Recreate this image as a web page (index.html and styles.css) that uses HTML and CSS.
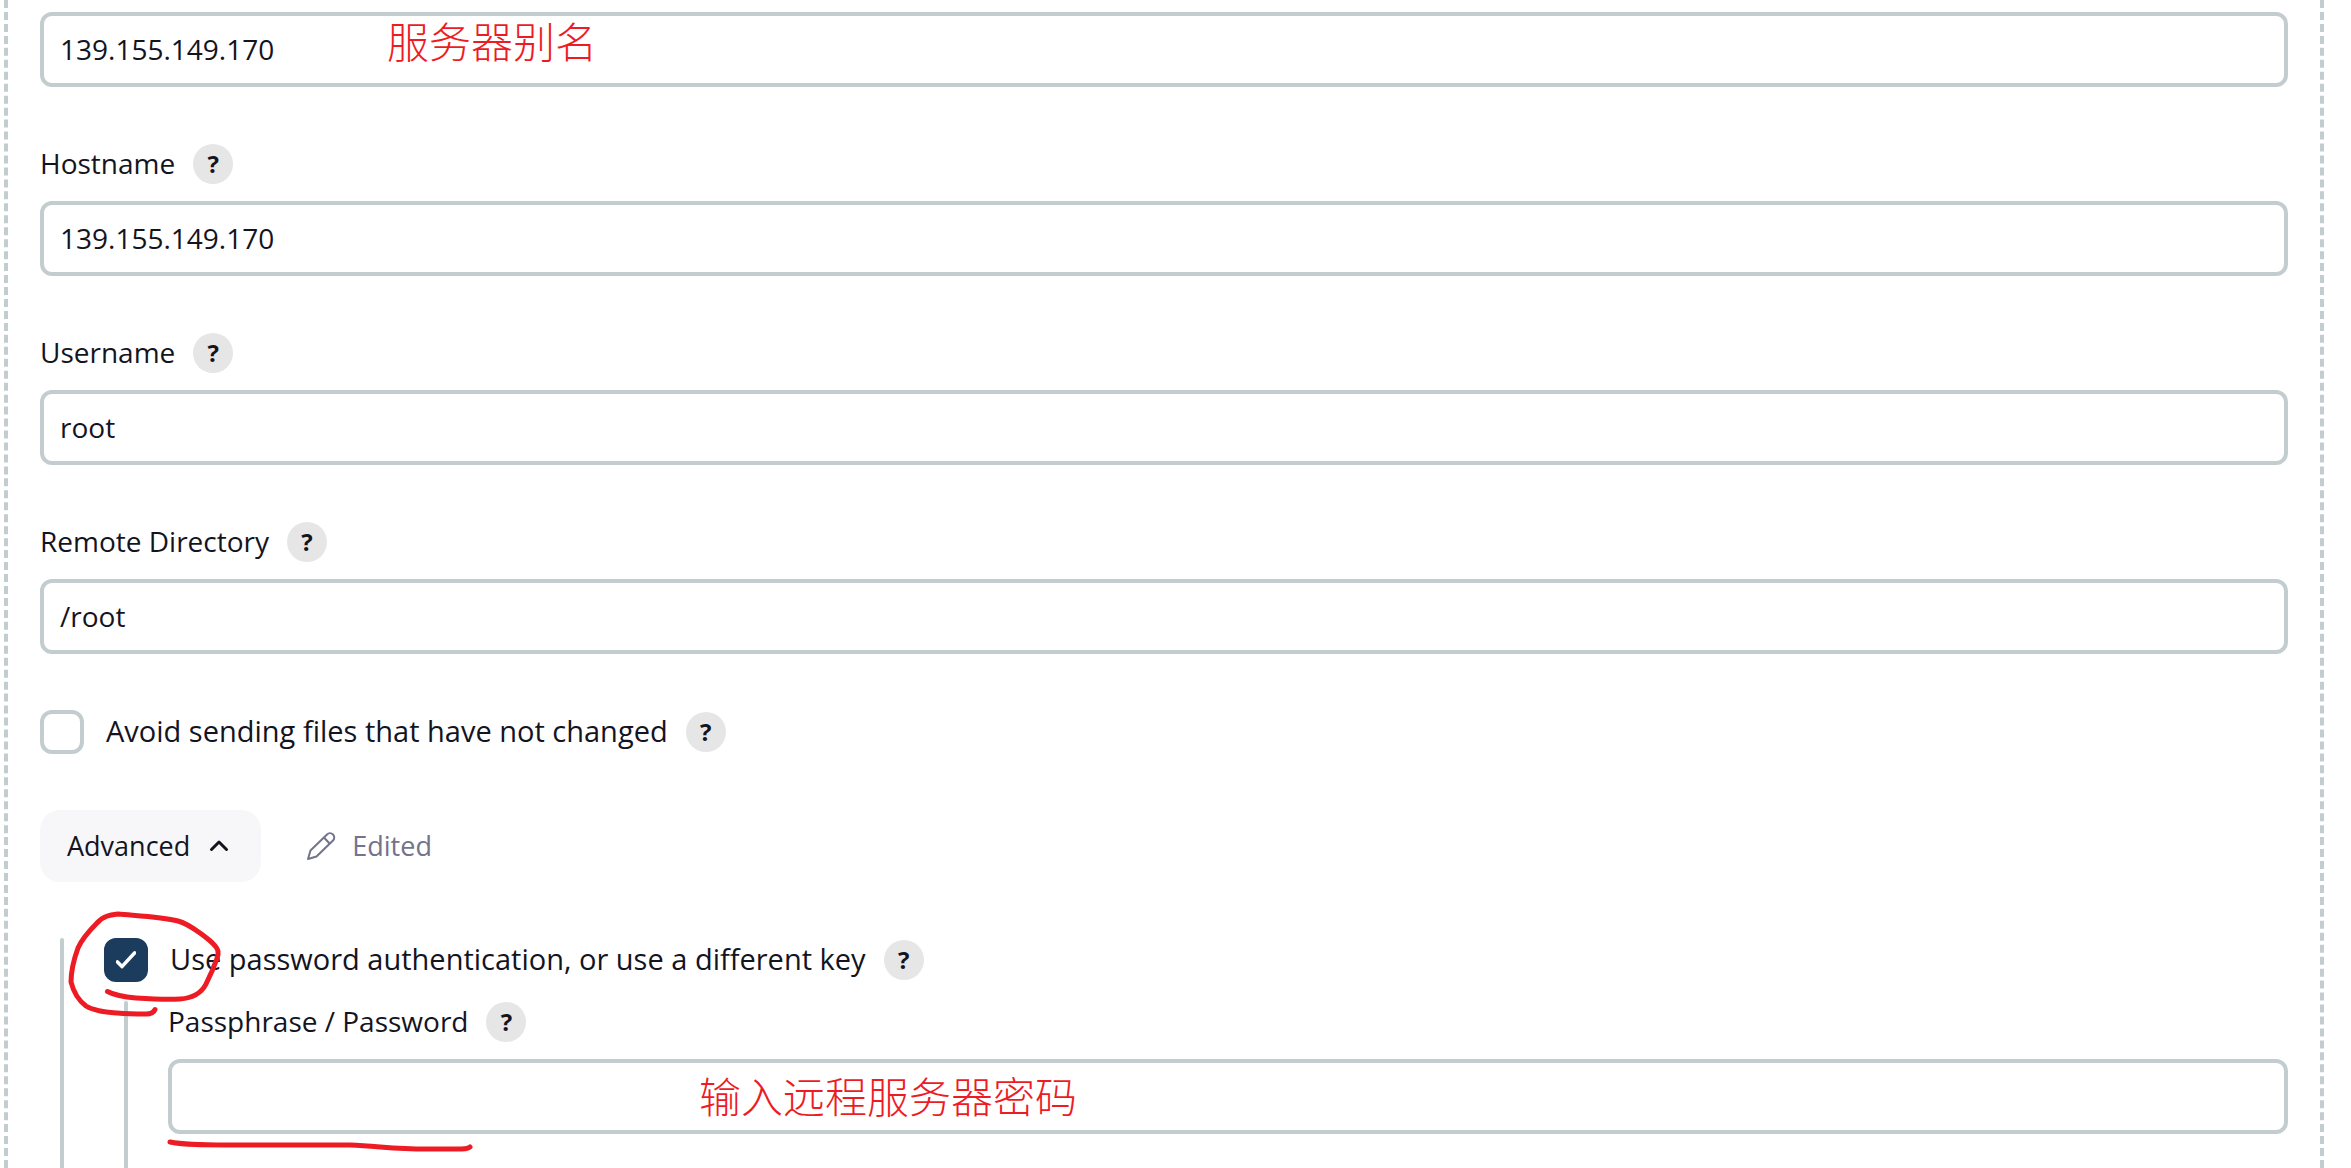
FILE: index.html
```html
<!DOCTYPE html>
<html lang="en">
<head>
    <meta charset="UTF-8">
    <meta name="viewport" content="width=device-width, initial-scale=1.0">
    <title>SSH Server</title>
    <link rel="stylesheet" href="styles.css">
</head>
<body>
    <form class="server">
        <div class="field">
            <div class="input-wrap">
                <input class="text-input" type="text" id="name" aria-label="Name" value="139.155.149.170">
                <span class="note note-name" lang="zh">服务器别名</span>
            </div>
        </div>

        <div class="field">
            <div class="label-row">
                <label for="hostname">Hostname</label>
                <button class="help" type="button" aria-label="Help for Hostname">?</button>
            </div>
            <input class="text-input" type="text" id="hostname" value="139.155.149.170">
        </div>

        <div class="field">
            <div class="label-row">
                <label for="username">Username</label>
                <button class="help" type="button" aria-label="Help for Username">?</button>
            </div>
            <input class="text-input" type="text" id="username" value="root">
        </div>

        <div class="field">
            <div class="label-row">
                <label for="remote-dir">Remote Directory</label>
                <button class="help" type="button" aria-label="Help for Remote Directory">?</button>
            </div>
            <input class="text-input" type="text" id="remote-dir" value="/root">
        </div>

        <div class="field check-row">
            <input class="checkbox" type="checkbox" id="avoid-same">
            <label for="avoid-same">Avoid sending files that have not changed</label>
            <button class="help" type="button" aria-label="Help for Avoid sending files">?</button>
        </div>

        <div class="field advanced-row">
            <button class="advanced-button" type="button" aria-expanded="true">
                Advanced
                <svg class="chevron" viewBox="0 0 24 24" aria-hidden="true">
                    <path d="M4.500 15.500L12 8l7.500 7.500"/>
                </svg>
            </button>
            <span class="edited">
                <svg class="pencil" viewBox="0 0 32 32" aria-hidden="true">
                    <path d="M3 29L5.500 20.500L22 4.500A4 4 0 0 1 28 10.500L11.500 26.500ZM19 7.500L24.500 13.500"/>
                </svg>
                Edited
            </span>
        </div>

        <div class="nested nested-outer">
            <div class="nested-body">
                <div class="check-row">
                    <input class="checkbox" type="checkbox" id="use-password" checked>
                    <label for="use-password">Use password authentication, or use a different key</label>
                    <button class="help" type="button" aria-label="Help for password authentication">?</button>
                    <svg class="mark mark-circle" viewBox="0 0 160 112" aria-hidden="true">
                        <path d="M43.500 83.500C50 87 60 89 72 90C88 91 106 91.500 116 91C130 90 138 84 142 76L149 61C151 54 155 49 154 44C154 38 144 31 136 25C129 20 122 15 114 13C98 9 76 8 54 6C46 7 39 8 33 15C25 23 18 31 14 40C10 51 7 62 7 74C9 82 14 92 22 98C30 103 42 104 53 105C65 106 74 106 82 106C87 106 90 104 91 101.500"/>
                    </svg>
                </div>
                <div class="nested nested-inner">
                    <div class="nested-body">
                        <div class="label-row">
                            <label for="password">Passphrase / Password</label>
                            <button class="help" type="button" aria-label="Help for Passphrase / Password">?</button>
                        </div>
                        <div class="input-wrap">
                            <input class="text-input" type="password" id="password">
                            <span class="note note-password" lang="zh">输入远程服务器密码</span>
                            <svg class="mark mark-underline" viewBox="0 0 312 16" aria-hidden="true">
                                <path d="M4 4C20 7 36 7 60 7H184C212 8 228 11 260 11H290C298 11 302 11 304 9"/>
                            </svg>
                        </div>
                    </div>
                </div>
            </div>
        </div>
    </form>
</body>
</html>
```

FILE: styles.css
```css
* {
    box-sizing: border-box;
}
body {
    margin: 0;
    background: #fff;
    color: #14141f;
    font-family: "Open Sans", "Noto Sans", sans-serif;
    font-size: 28px;
    line-height: 40px;
}
.server {
    display: flex;
    flex-direction: column;
    min-height: 100vh;
    margin: 0 27px 0 4px;
    padding: 12px 32px 0;
    border: 4px dashed #c3cccf;
    border-width: 0 4px;
}
.field {
    margin-bottom: 56px;
}
.label-row {
    display: flex;
    align-items: center;
    gap: 18px;
    margin-bottom: 17px;
    padding-top: 1px;
}
.label-row label,
.check-row label {
    padding-bottom: 2px;
    line-height: 38px;
}
.input-wrap {
    position: relative;
}
.text-input {
    display: block;
    width: 100%;
    height: 75px;
    padding: 0 16px 2px;
    border: 4px solid #c3cccf;
    border-radius: 12px;
    background: #fff;
    color: inherit;
    font: inherit;
}
.help {
    width: 40px;
    height: 40px;
    padding: 0;
    border: none;
    border-radius: 50%;
    background: #e6e6e6;
    color: inherit;
    font: inherit;
    font-size: 24px;
    font-weight: 700;
    cursor: pointer;
}
.check-row {
    display: flex;
    position: relative;
    align-items: center;
}
.check-row label {
    margin: 0 18px 0 22px;
    font-size: 29px;
}
.checkbox {
    appearance: none;
    width: 44px;
    height: 44px;
    margin: 0;
    border: 4px solid #c3cccf;
    border-radius: 12px;
    background: #fff;
}
.checkbox:checked {
    display: grid;
    place-items: center;
    border-color: #1b3c5c;
    background: #1b3c5c;
}
.checkbox:checked::before {
    content: "";
    width: 24px;
    height: 24px;
    background: #fff;
    clip-path: path("M2 13Q3 11 5 13L8 16L19 4Q21 2 22 4L22 6L9 20Q8 21 7 20L2 15Z");
}
.advanced-row {
    display: flex;
    align-items: center;
    gap: 44px;
}
.advanced-button {
    display: flex;
    align-items: center;
    gap: 17px;
    height: 72px;
    padding: 0 30px 0 27px;
    border: none;
    border-radius: 20px;
    background: #f7f7fa;
    color: inherit;
    font: inherit;
    font-size: 27px;
    cursor: pointer;
}
.chevron {
    width: 24px;
    height: 24px;
    fill: none;
    stroke: currentColor;
    stroke-width: 3;
    stroke-linecap: round;
    stroke-linejoin: round;
}
.edited {
    display: flex;
    align-items: center;
    gap: 15px;
    color: #73738c;
    font-size: 27px;
}
.pencil {
    width: 32px;
    height: 32px;
    fill: none;
    stroke: currentColor;
    stroke-width: 2;
    stroke-linejoin: round;
}

/* Indented groups with a guide line on the left */
.nested {
    display: flex;
    gap: 40px;
    flex: 1;
    margin-left: 20px;
}
.nested::before {
    content: "";
    width: 4px;
    border-radius: 2px 2px 0 0;
    background: #c3cccf;
}
.nested-body {
    display: flex;
    flex-direction: column;
    flex: 1;
}
.nested-inner {
    margin-top: 19px;
}

/* Red annotations */
.note {
    position: absolute;
    color: #ed1c24;
    font-family: "Noto Sans CJK SC", sans-serif;
    font-size: 42px;
    font-weight: 300;
    line-height: 60px;
    white-space: nowrap;
    pointer-events: none;
}
.note-name {
    top: -2px;
    left: 347px;
}
.note-password {
    top: 6px;
    left: 531px;
}
.mark {
    position: absolute;
    fill: none;
    stroke: #ed1c24;
    stroke-width: 5;
    stroke-linecap: round;
    stroke-linejoin: round;
    pointer-events: none;
}
.mark-circle {
    top: -30px;
    left: -40px;
    width: 160px;
    height: 112px;
}
.mark-underline {
    top: 79px;
    left: -2px;
    width: 312px;
    height: 16px;
}
```
